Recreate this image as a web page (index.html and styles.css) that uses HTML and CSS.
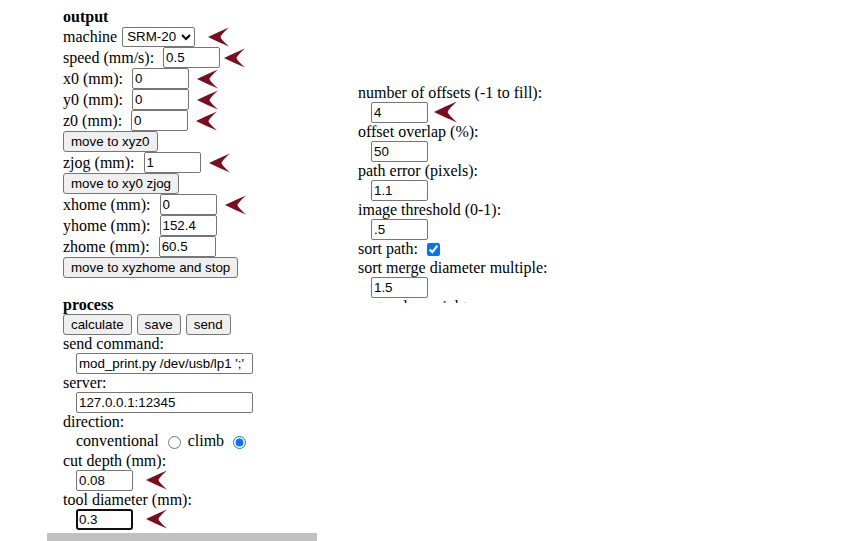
FILE: index.html
```html
<!DOCTYPE html>
<html>
	<head>
		<meta charset="UTF-8">
		<title>mill raster 2D</title>
		<link rel="stylesheet" href="styles.css">
	</head>
	<body>
		<svg width="0" height="0" class="defs">
			<defs>
				<path id="pointer" d="M0 10 Q10 5 22 0 Q14 7 13 10 Q14 13 22 20 Q10 15 0 10 Z"/>
			</defs>
		</svg>

		<div class="page">
			<div class="module">
				<div class="fields">
					<div class="row head">output</div>
					<div class="row">
						<span>machine</span>
						<select class="machine"><option>SRM-20</option></select>
						<svg class="arrow wide" viewBox="0 0 22 20"><use href="#pointer"/></svg>
					</div>
					<div class="row">
						<span>speed (mm/s):</span>
						<input class="num" value="0.5">
						<svg class="arrow near" viewBox="0 0 22 20"><use href="#pointer"/></svg>
					</div>
					<div class="row">
						<span>x0 (mm):</span>
						<input class="num" value="0">
						<svg class="arrow" viewBox="0 0 22 20"><use href="#pointer"/></svg>
					</div>
					<div class="row">
						<span>y0 (mm):</span>
						<input class="num" value="0">
						<svg class="arrow" viewBox="0 0 22 20"><use href="#pointer"/></svg>
					</div>
					<div class="row">
						<span>z0 (mm):</span>
						<input class="num" value="0">
						<svg class="arrow" viewBox="0 0 22 20"><use href="#pointer"/></svg>
					</div>
					<div class="row"><button>move to xyz0</button></div>
					<div class="row">
						<span>zjog (mm):</span>
						<input class="num" value="1">
						<svg class="arrow" viewBox="0 0 22 20"><use href="#pointer"/></svg>
					</div>
					<div class="row"><button>move to xy0 zjog</button></div>
					<div class="row">
						<span>xhome (mm):</span>
						<input class="num" value="0">
						<svg class="arrow" viewBox="0 0 22 20"><use href="#pointer"/></svg>
					</div>
					<div class="row">
						<span>yhome (mm):</span>
						<input class="num" value="152.4">
					</div>
					<div class="row">
						<span>zhome (mm):</span>
						<input class="num" value="60.5">
					</div>
					<div class="row"><button>move to xyzhome and stop</button></div>

					<div class="spacer"></div>

					<div class="line head">process</div>
					<div class="line buttons">
						<button>calculate</button>
						<button>save</button>
						<button>send</button>
					</div>
					<div class="line">send command:</div>
					<div class="line indent"><input class="long" value="mod_print.py /dev/usb/lp1 ';'"></div>
					<div class="line">server:</div>
					<div class="line indent"><input class="long" value="127.0.0.1:12345"></div>
					<div class="line">direction:</div>
					<div class="line indent">
						<span>conventional</span>
						<input type="radio" name="dir">
						<span>climb</span>
						<input type="radio" name="dir" checked>
					</div>
					<div class="line">cut depth (mm):</div>
					<div class="line indent">
						<input class="num" value="0.08">
						<svg class="arrow wide" viewBox="0 0 22 20"><use href="#pointer"/></svg>
					</div>
					<div class="line">tool diameter (mm):</div>
					<div class="line indent">
						<input class="num focus" value="0.3">
						<svg class="arrow wide" viewBox="0 0 22 20"><use href="#pointer"/></svg>
					</div>
				</div>
				<div class="scrollbar"></div>
			</div>

			<div class="module side">
				<div class="line">number of offsets (-1 to fill):</div>
				<div class="line indent">
					<input class="num" value="4">
					<svg class="arrow big" viewBox="0 0 22 20"><use href="#pointer"/></svg>
				</div>
				<div class="line">offset overlap (%):</div>
				<div class="line indent"><input class="num" value="50"></div>
				<div class="line">path error (pixels):</div>
				<div class="line indent"><input class="num" value="1.1"></div>
				<div class="line">image threshold (0-1):</div>
				<div class="line indent"><input class="num" value=".5"></div>
				<div class="line">
					<span>sort path:</span>
					<input type="checkbox" checked>
				</div>
				<div class="line">sort merge diameter multiple:</div>
				<div class="line indent"><input class="num" value="1.5"></div>
				<div class="line">sort order weight:</div>
				<div class="line indent"><input class="num" value="-1"></div>
			</div>
		</div>
	</body>
</html>
```

FILE: styles.css
```css
*{
	margin: 0;
	padding: 0;
	box-sizing: border-box;
}
body{
	font-family: "Liberation Serif", "Times New Roman", serif;
	font-size: 16px;
	color: #000;
	background: #fff;
	overflow: hidden;
}
.defs{
	position: absolute;
}
.page{
	display: flex;
	align-items: flex-start;
}
.module{
	width: 270px;
	margin-left: 47px;
}
.fields{
	padding: 8px 0 4px 16px;
}
.row{
	display: flex;
	align-items: center;
	gap: 4px;
	height: 21px;
	white-space: nowrap;
}
.row > input.num{
	margin-left: 5px;
}
.fields > .head:first-child{
	height: 18px;
}
.head{
	font-weight: bold;
}
.spacer{
	height: 17px;
}
.line{
	display: flex;
	align-items: center;
	gap: 4px;
	height: 19.5px;
	white-space: nowrap;
}
.indent{
	padding-left: 13px;
}
.buttons{
	gap: 5px;
}
input, select, button{
	font-family: "Liberation Sans", Arial, sans-serif;
	font-size: 13.33px;
	color: #000;
}
input.num, input.long{
	height: 21px;
	padding: 1px 2px;
	border: 1px solid #767676;
	border-radius: 2px;
	background: #fff;
	flex: none;
}
.num{
	width: 57px;
}
.long{
	width: 177px;
}
.focus{
	border: 2px solid #101010 !important;
	border-radius: 3px !important;
	padding: 0 1px !important;
}
select.machine{
	width: 73px;
	height: 20px;
	border: 1px solid #767676;
	border-radius: 2px;
	background: #fff;
	margin-left: 1px;
}
button{
	height: 21px;
	padding: 1px 7px;
	border: 1px solid #767676;
	border-radius: 3px;
	background: #efefef;
	flex: none;
}
input[type=radio]{
	width: 13px;
	height: 13px;
	margin: 2px 3px 0 5px;
	accent-color: #0075ff;
}
input[type=checkbox]{
	width: 13px;
	height: 13px;
	margin: 1px 0 0 5px;
	accent-color: #0075ff;
}
.arrow{
	width: 21px;
	height: 20px;
	fill: #7b0d1e;
	margin-left: 4px;
	flex: none;
}
.arrow.near{
	margin-left: 0;
}
.arrow.wide{
	margin-left: 9px;
}
.arrow.big{
	width: 23px;
	height: 22px;
	margin-left: 2px;
}
.scrollbar{
	height: 12px;
	background: #c1c1c1;
}
.module.side{
	margin: 83px 0 0 41px;
	height: 220px;
	overflow: hidden;
}
```
